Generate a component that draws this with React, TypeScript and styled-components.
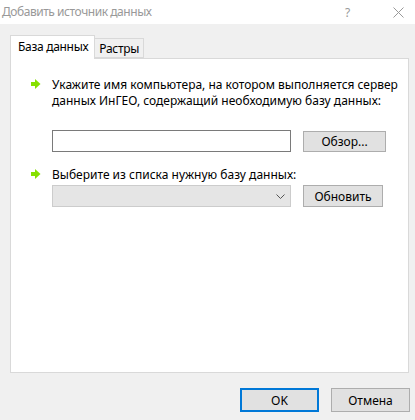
import styled, { createGlobalStyle } from 'styled-components';

const Global = createGlobalStyle`
  html, body {
    margin: 0;
    padding: 0;
    background: #f0f0f0;
  }
  body {
    font-family: "Noto Sans", "Open Sans", sans-serif;
    font-size: 12px;
    color: #000;
  }
`;

const Arrow = () => (
  <svg width="10" height="10" viewBox="0 0 10 10">
    <rect x="0" y="3" width="5" height="4" fill="#86e000" />
    <polygon points="4,0 9.5,5 4,10" fill="#86e000" />
  </svg>
);

const Chevron = () => (
  <svg width="9" height="5" viewBox="0 0 9 5">
    <polyline points="0.5,0.5 4.5,4.5 8.5,0.5" fill="none" stroke="#555" strokeWidth="1" />
  </svg>
);

const CloseIcon = () => (
  <svg width="11" height="11" viewBox="0 0 11 11">
    <path d="M0.5 0.5 L10.5 10.5 M10.5 0.5 L0.5 10.5" stroke="#999" strokeWidth="1" />
  </svg>
);

const App = () => {
  return (
    <>
      <Global />
      <Window>
        <TitleBar>
          <Title>Добавить источник данных</Title>
          <Help>?</Help>
          <Close>
            <CloseIcon />
          </Close>
        </TitleBar>
        <Body>
          <Tabs>
            <Tab $active>База данных</Tab>
            <Tab>Растры</Tab>
          </Tabs>
          <Panel>
            <Step>
              <ArrowCell>
                <Arrow />
              </ArrowCell>
              <Label>
                Укажите имя компьютера, на котором выполняется сервер
                <br />
                данных ИнГЕО, содержащий необходимую базу данных:
              </Label>
            </Step>
            <Row $top={21}>
              <TextInput />
              <Button $w={83} $h={21}>Обзор...</Button>
            </Row>
            <Step $top={15}>
              <ArrowCell>
                <Arrow />
              </ArrowCell>
              <Label>Выберите из списка нужную базу данных:</Label>
            </Step>
            <Row $top={2}>
              <Select>
                <Chevron />
              </Select>
              <Button $w={80} $h={22}>Обновить</Button>
            </Row>
          </Panel>
          <Footer>
            <Button $w={79} $h={24} $default>OK</Button>
            <Button $w={79} $h={24}>Отмена</Button>
          </Footer>
        </Body>
      </Window>
    </>
  );
};

const Window = styled.div`
  width: 415px;
  height: 420px;
  background: #f0f0f0;
  overflow: hidden;
`;

const TitleBar = styled.div`
  height: 24px;
  background: #fff;
  display: flex;
  align-items: center;
  color: #999;
`;

const Title = styled.div`
  flex: 1;
  padding-left: 2px;
  font-size: 12px;
  letter-spacing: -0.45px;
  margin-top: -1px;
`;

const Help = styled.div`
  width: 12px;
  margin-right: 36px;
  font-size: 12px;
`;

const Close = styled.div`
  width: 11px;
  display: flex;
  margin-right: 11px;
`;

const Body = styled.div`
  padding: 11px 5px 0 10px;
`;

const Tabs = styled.div`
  display: flex;
  align-items: flex-end;
  height: 23px;
`;

const Tab = styled.div<{ $active?: boolean }>`
  position: relative;
  z-index: ${({ $active }) => ($active ? 1 : 0)};
  box-sizing: border-box;
  height: ${({ $active }) => ($active ? '24px' : '20px')};
  margin-bottom: ${({ $active }) => ($active ? '-1px' : '0')};
  margin-left: ${({ $active }) => ($active ? '0' : '-1px')};
  padding: ${({ $active }) => ($active ? '0 6px 2px 7px' : '0 4px')};
  letter-spacing: -0.3px;
  background: ${({ $active }) => ($active ? '#fff' : '#f0f0f0')};
  border: 1px solid #d9d9d9;
  border-bottom: ${({ $active }) => ($active ? 'none' : '1px solid #d9d9d9')};
  display: flex;
  align-items: center;
`;

const Panel = styled.div`
  box-sizing: border-box;
  width: 399px;
  height: 315px;
  background: #fff;
  border: 1px solid #d9d9d9;
  padding: 18px 0 0 20px;
`;

const Step = styled.div<{ $top?: number }>`
  display: flex;
  margin-top: ${({ $top }) => $top ?? 0}px;
`;

const ArrowCell = styled.div`
  width: 21px;
  display: flex;
  padding-top: 2px;
`;

const Label = styled.div`
  line-height: 16px;
  white-space: nowrap;
`;

const Row = styled.div<{ $top?: number }>`
  display: flex;
  align-items: center;
  gap: 12px;
  margin-left: 21px;
  margin-top: ${({ $top }) => $top ?? 0}px;
`;

const TextInput = styled.div`
  box-sizing: border-box;
  width: 239px;
  height: 22px;
  border: 1px solid #7a7a7a;
  background: #fff;
`;

const Select = styled.div`
  box-sizing: border-box;
  width: 239px;
  height: 22px;
  border: 1px solid #cccccc;
  background: #e5e5e5;
  display: flex;
  align-items: center;
  justify-content: flex-end;
  padding-right: 5px;
`;

const Button = styled.div<{ $w: number; $h: number; $default?: boolean }>`
  box-sizing: border-box;
  width: ${({ $w }) => $w}px;
  height: ${({ $h }) => $h}px;
  background: #e1e1e1;
  border: ${({ $default }) => ($default ? '2px solid #0078d7' : '1px solid #adadad')};
  display: flex;
  align-items: center;
  justify-content: center;
`;

const Footer = styled.div`
  display: flex;
  justify-content: flex-end;
  gap: 12px;
  margin-top: 15px;
`;

export default App;
